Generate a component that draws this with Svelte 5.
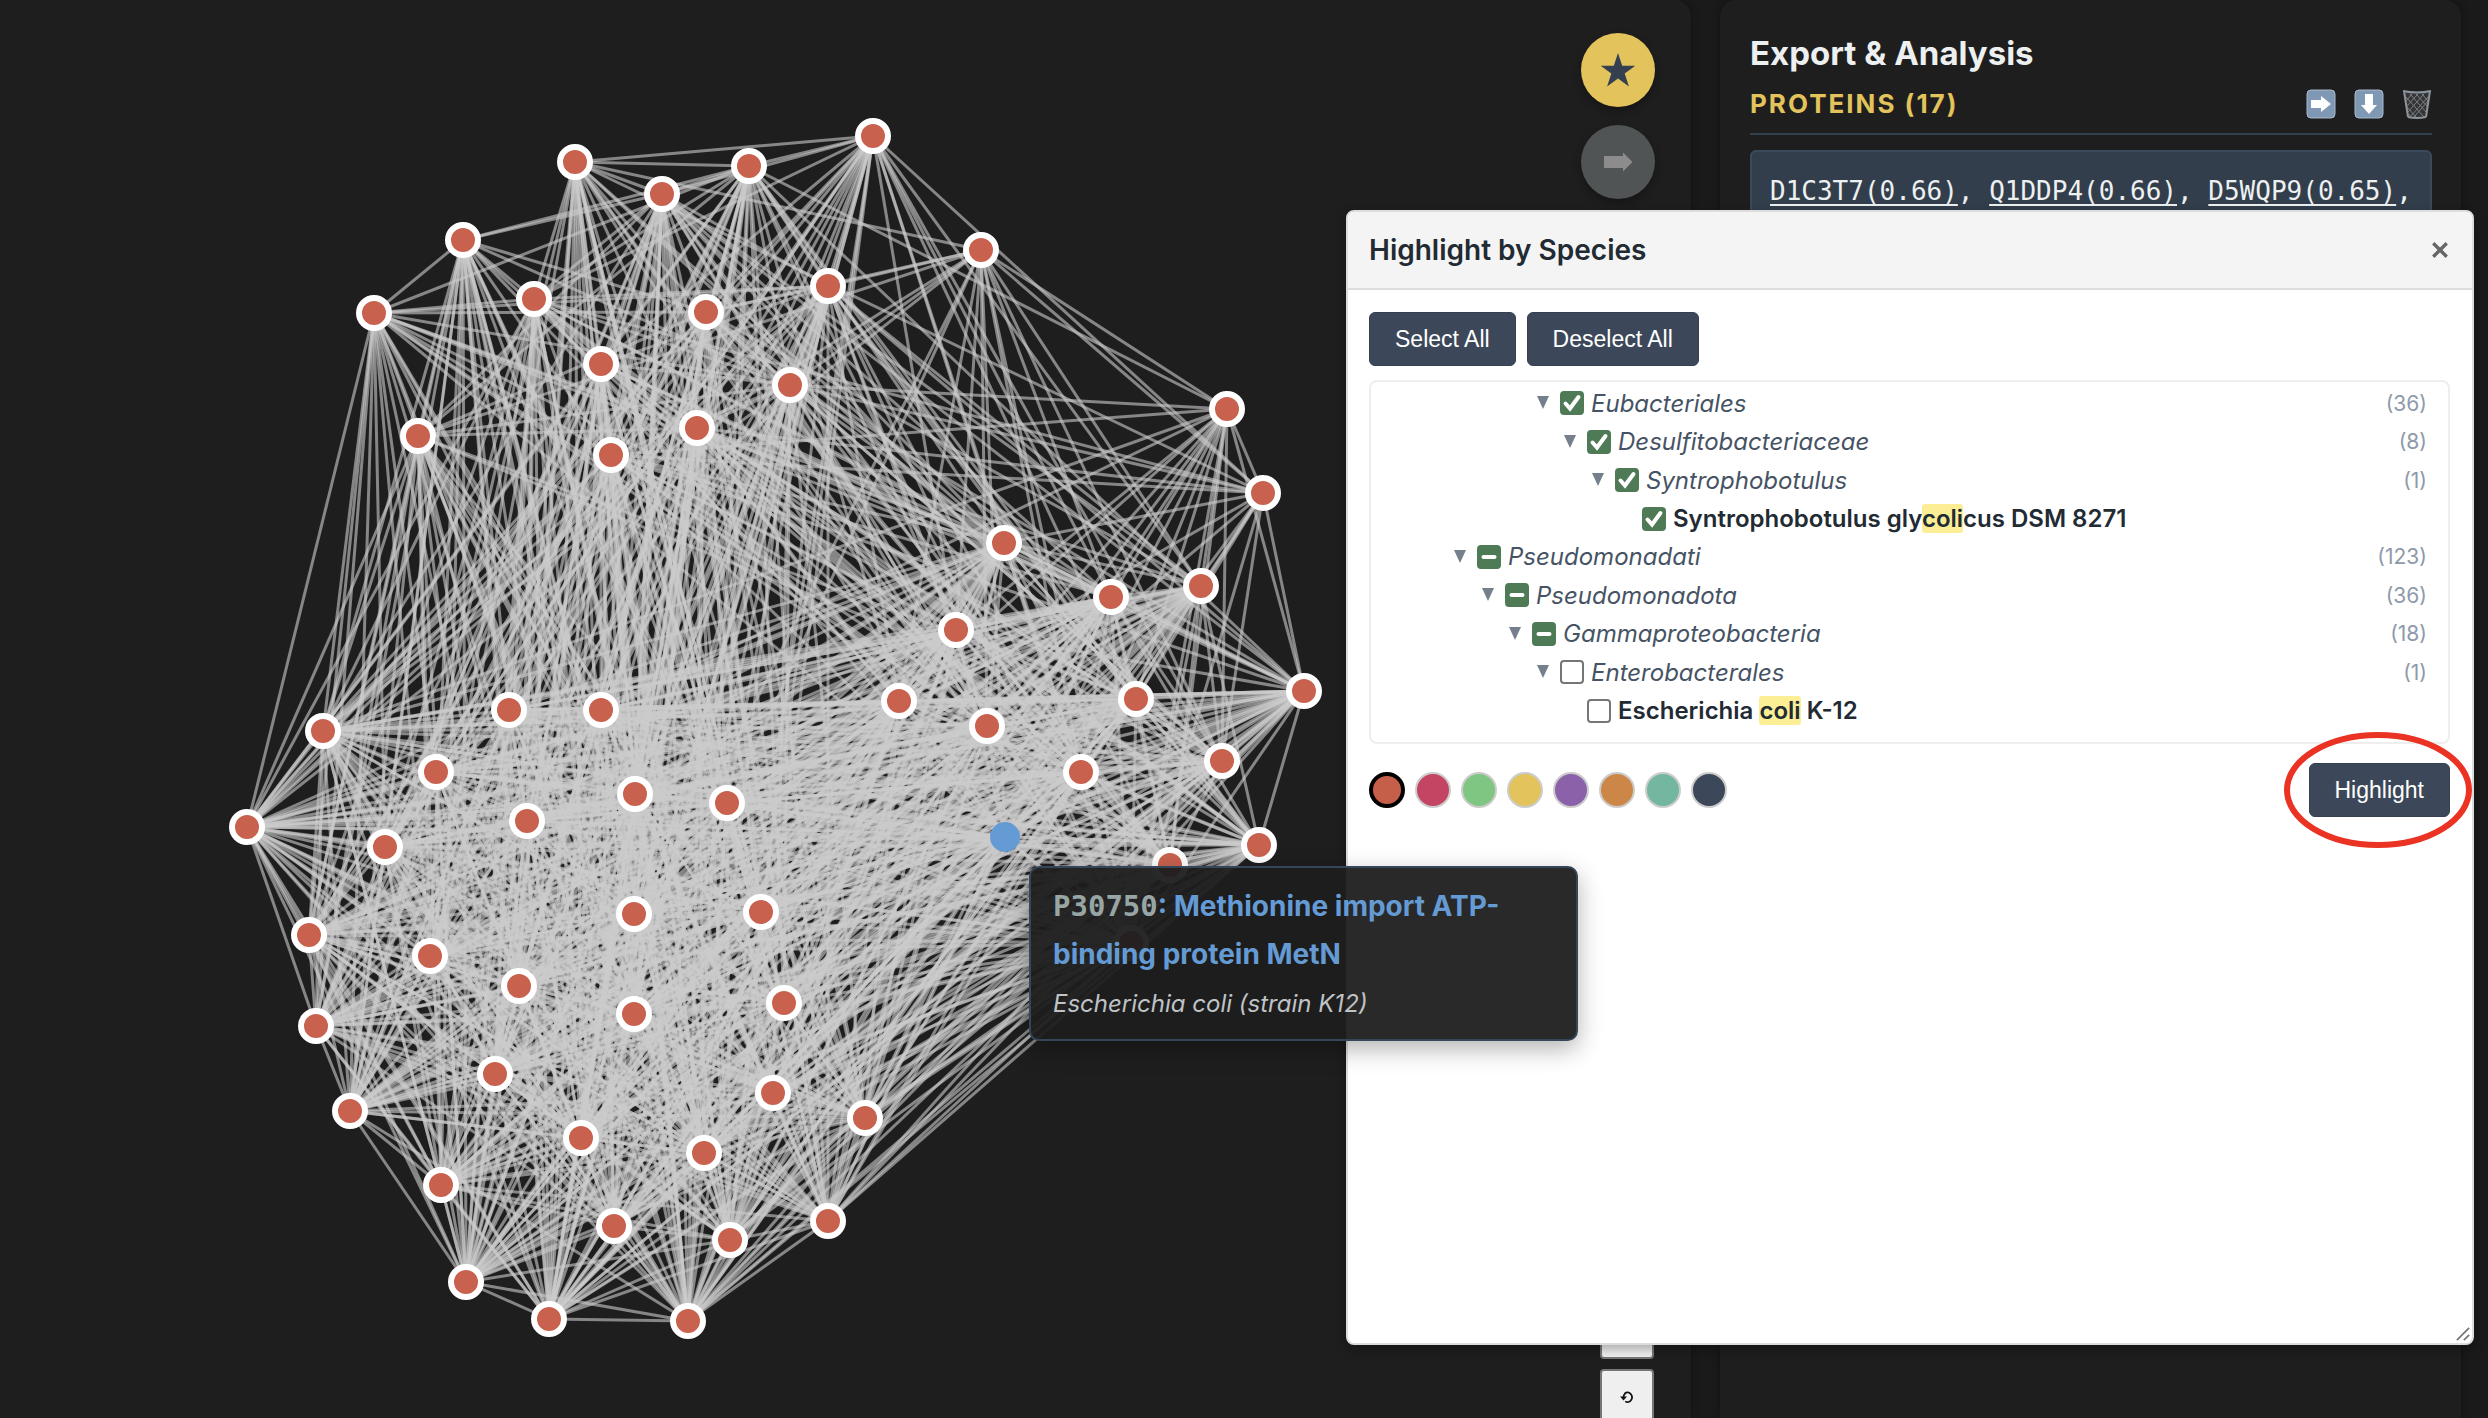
<script>
  // Protein nodes, grouped by the part of the layout they settle in.
  const top = [
    [575, 162], [749, 166], [873, 136], [662, 194], [463, 240], [374, 313], [534, 299], [828, 286],
    [706, 312], [601, 364], [790, 385], [697, 428], [611, 455], [418, 436]
  ];
  const bridge = [[981, 250], [1227, 409], [1263, 493]];
  const right = [
    [1004, 543], [1111, 597], [1201, 586], [956, 630], [899, 701], [987, 726], [1136, 699], [1304, 691],
    [1222, 761], [1081, 772], [1005, 837], [1259, 845], [1170, 865], [1131, 943]
  ];
  const bottom = [
    [247, 827], [323, 731], [436, 772], [509, 710], [601, 710], [385, 847], [527, 821], [635, 794],
    [727, 803], [309, 935], [430, 956], [519, 986], [634, 914], [761, 912], [316, 1026], [634, 1014],
    [784, 1003], [495, 1074], [773, 1093], [350, 1111], [581, 1138], [704, 1153], [441, 1185],
    [614, 1226], [730, 1240], [466, 1282], [549, 1319], [688, 1321], [828, 1221], [865, 1118]
  ];
  const nodes = [
    ...top.map(([x, y]) => ({ x, y, g: 't' })),
    ...bridge.map(([x, y]) => ({ x, y, g: 'u' })),
    ...right.map(([x, y]) => ({ x, y, g: 'r', active: x === 1005 })),
    ...bottom.map(([x, y]) => ({ x, y, g: 'b' }))
  ];
  const density = {
    tt: 0.62, tu: 0.36, tr: 0.42, tb: 0.58, uu: 1, ur: 0.7, ub: 0.14, rr: 0.8, rb: 0.9, bb: 0.84
  };
  let seed = 7;
  const rand = () => {
    seed = (seed * 1103515245 + 12345) % 2147483648;
    return seed / 2147483648;
  };
  const edges = [];
  nodes.forEach((a, i) => {
    nodes.slice(i + 1).forEach((b) => {
      const flank = a.g === 't' && a.x < 420 && b.x < 330;
      if (rand() < density[a.g + b.g] || flank) edges.push({ a, b });
    });
  });

  const rows = [
    { level: 4, state: 'on', name: ['Eubacteriales'], count: 36 },
    { level: 5, state: 'on', name: ['Desulfitobacteriaceae'], count: 8 },
    { level: 6, state: 'on', name: ['Syntrophobotulus'], count: 1 },
    { level: 7, state: 'on', name: ['Syntrophobotulus gly', 'coli', 'cus DSM 8271'], leaf: true },
    { level: 1, state: 'mixed', name: ['Pseudomonadati'], count: 123 },
    { level: 2, state: 'mixed', name: ['Pseudomonadota'], count: 36 },
    { level: 3, state: 'mixed', name: ['Gammaproteobacteria'], count: 18 },
    { level: 4, state: 'off', name: ['Enterobacterales'], count: 1 },
    { level: 5, state: 'off', name: ['Escherichia ', 'coli', ' K-12'], leaf: true }
  ];
  const colours = [
    ['Red', '#c65f4a'], ['Pink', '#c44464'], ['Green', '#7fc682'], ['Yellow', '#e3c35b'],
    ['Purple', '#8b62a9'], ['Orange', '#cb8648'], ['Teal', '#73b7a0'], ['Navy', '#3c4859']
  ];
  const proteins = ['D1C3T7(0.66)', 'Q1DDP4(0.66)', 'D5WQP9(0.65)'];
</script>

<div class="app">
  <main class="panel network">
    <svg class="graph" viewBox="0 0 1691 1418" preserveAspectRatio="xMinYMin meet" role="img" aria-label="Protein network">
      <g class="edges">
        {#each edges as { a, b }}
          <line x1={a.x} y1={a.y} x2={b.x} y2={b.y} />
        {/each}
      </g>
      {#each nodes as n}
        <circle class="node" class:active={n.active} cx={n.x} cy={n.y} r="15" />
      {/each}
    </svg>
    <div class="tools">
      <button class="round star" aria-label="Favourite">
        <svg viewBox="0 0 36 36"><path d="M18 1l4.200 12.800h13.100l-10.600 7.700 4.200 13L18 26.500 7.100 34.500l4.200-13L.7 13.800h13.100z" /></svg>
      </button>
      <button class="round" aria-label="Export selection" disabled>
        <svg viewBox="0 0 36 36"><path d="M4 12h19V8.500l9.500 9.500-9.500 9.500V24H4z" /></svg>
      </button>
    </div>
    <div class="zoomers">
      <button aria-label="Zoom out"></button>
      <button aria-label="Reset view">
        <svg viewBox="0 0 16 16"><path d="M5.500 4A5 5.500 0 1 1 6 13" /><path class="tip" d="M0 7.500h8L4 12z" /><path d="M4 8.500Q4 5.500 6 3.800" /></svg>
      </button>
    </div>
  </main>

  <aside class="panel export">
    <h1>Export &amp; Analysis</h1>
    <div class="section">
      <h2>PROTEINS (17)</h2>
      <div class="actions">
        <button aria-label="Send proteins">
          <svg viewBox="0 0 30 30"><rect class="tile" x="1" y="1" width="28" height="28" rx="4" /><path class="arrow" d="M5 11h10V7l10 8-10 8v-4H5z" /></svg>
        </button>
        <button aria-label="Download proteins">
          <svg viewBox="0 0 30 30"><rect class="tile" x="1" y="1" width="28" height="28" rx="4" /><path class="arrow" d="M11 5h8v11h4l-8 9-8-9h4z" /></svg>
        </button>
        <button aria-label="Clear proteins">
          <svg viewBox="0 0 30 30">
            <path class="bin" d="M2 2h26l-4 26q-9 2-18 0z" />
            <path class="mesh" d="M4 8l18 20M8 5l16 18M14 5l11 12M20 5l6 7M26 8L8 28M22 5L6 23M16 5L5 17M10 5l-6 7M12 28L26 12M4 17l11 12M5 23l4 5" />
            <path class="rim" d="M1 2q14 3 28 0M2 2l4 26M28 2l-4 26" />
            <path class="rim" d="M6 28q9 2 18 0" />
          </svg>
        </button>
      </div>
    </div>
    <p class="list">{#each proteins as p}<a href="#{p}">{p}</a>{', '}{/each}</p>
  </aside>

  <div class="dialog" role="dialog" aria-labelledby="dialog-title">
    <header>
      <h2 id="dialog-title">Highlight by Species</h2>
      <button class="close" aria-label="Close">
        <svg viewBox="0 0 16 16"><path d="M2 2l12 12M14 2L2 14" /></svg>
      </button>
    </header>
    <div class="body">
      <div class="bulk">
        <button class="btn">Select All</button>
        <button class="btn">Deselect All</button>
      </div>
      <div class="tree">
        {#each rows as r}
          <div class="row l{r.level}">
            {#if !r.leaf}
              <button class="twist" aria-label="Collapse {r.name[0]}">
                <svg viewBox="0 0 12 14"><path d="M0 0h12L6 13z" /></svg>
              </button>
            {/if}
            <label class:leaf={r.leaf}>
              <span class="box">
                <input type="checkbox" checked={r.state === 'on'} indeterminate={r.state === 'mixed'} />
                {#if r.state === 'on'}
                  <svg viewBox="0 0 24 24"><path d="M5.500 12.500l4.500 5L18.500 6" /></svg>
                {:else if r.state === 'mixed'}
                  <svg viewBox="0 0 24 24"><path d="M6.500 12h11" /></svg>
                {/if}
              </span>
              <span class="name">{r.name[0]}{#if r.leaf}<mark>{r.name[1]}</mark>{r.name[2]}{/if}</span>
            </label>
            {#if !r.leaf}<span class="count">({r.count})</span>{/if}
          </div>
        {/each}
      </div>
      <div class="foot">
        <div class="swatches">
          {#each colours as [name, value], i}
            <button class="swatch" class:picked={i === 0} aria-label={name} style="background: {value}"></button>
          {/each}
        </div>
        <div class="confirm">
          <button class="btn">Highlight</button>
          <svg class="ring" viewBox="0 0 188 116"><ellipse cx="94" cy="58" rx="91" ry="55" /></svg>
        </div>
      </div>
    </div>
    <svg class="grip" viewBox="0 0 16 16"><path d="M1 15L15 1M9 15l6-6" /></svg>
  </div>

  <div class="tooltip" role="tooltip">
    <strong><code>P30750</code>: Methionine import ATP-<br />binding protein MetN</strong>
    <em>Escherichia coli (strain K12)</em>
  </div>
</div>

<style>
  :global(body) {
    background: #1a1a1a;
    overflow: hidden;
  }
  .app {
    --slate: #3c4859;
    --gold: #e3c35b;
    --mono: 'DejaVu Sans Mono', 'Liberation Mono', monospace;
    position: relative;
    box-sizing: border-box;
    display: grid;
    grid-template-columns: minmax(0, 1fr) 741px;
    gap: 29px;
    height: 100vh;
    padding-right: 27px;
    font-family: Inter, 'Liberation Sans', sans-serif;
    overflow: hidden;
  }
  h1, h2, p {
    margin: 0;
  }
  button {
    padding: 0;
    border: 0;
    background: none;
    font: inherit;
    color: inherit;
    cursor: pointer;
  }
  svg {
    display: block;
  }
  .panel {
    background: #1e1e1e;
    border-radius: 16px 16px 0 0;
    box-shadow: 0 0 8px rgba(0, 0, 0, 0.35);
  }
  .network {
    position: relative;
    border-top-left-radius: 0;
  }
  .graph {
    width: 100%;
  }
  .edges {
    stroke: #ccc;
    stroke-width: 3;
    stroke-opacity: 0.6;
  }
  .node {
    fill: #c8624e;
    stroke: #fff;
    stroke-width: 6;
  }
  .node.active {
    fill: #659bd4;
    stroke: none;
  }
  .tools {
    position: absolute;
    top: 33px;
    right: 36px;
    display: grid;
    gap: 18px;
  }
  .round {
    display: grid;
    place-items: center;
    width: 74px;
    height: 74px;
    border-radius: 50%;
    background: #505455;
    box-shadow: 0 4px 8px rgba(0, 0, 0, 0.3);
  }
  .round svg {
    width: 36px;
    fill: #8c8c8c;
  }
  .round.star {
    background: var(--gold);
  }
  .round.star svg {
    fill: #34404f;
  }
  .zoomers {
    position: absolute;
    top: 1304px;
    right: 37px;
    display: grid;
    gap: 10px;
  }
  .zoomers button {
    display: grid;
    place-items: center;
    box-sizing: border-box;
    width: 54px;
    height: 55px;
    border: 2px solid #767676;
    border-radius: 4px;
    background: #efefef;
  }
  .zoomers svg {
    width: 14px;
    fill: none;
    stroke: #111;
    stroke-width: 2;
  }
  .zoomers .tip {
    fill: #111;
    stroke: none;
  }
  .export {
    padding: 32px 29px 0 30px;
    color: #edf0f1;
  }
  h1 {
    font-size: 33px;
    line-height: 43px;
    font-weight: 700;
  }
  .section {
    display: flex;
    justify-content: space-between;
    align-items: center;
    height: 58px;
    border-bottom: 2px solid #33414f;
  }
  .section h2 {
    color: var(--gold);
    font-size: 26px;
    line-height: 32px;
    font-weight: 700;
    letter-spacing: 2px;
  }
  .actions {
    display: flex;
    gap: 18px;
  }
  .actions svg {
    width: 30px;
  }
  .tile {
    fill: #7f99b5;
    stroke: #a7b9ca;
  }
  .arrow {
    fill: #fff;
  }
  .bin {
    fill: #333537;
  }
  .mesh {
    fill: none;
    stroke: #7d7f82;
  }
  .rim {
    fill: none;
    stroke: #8b939b;
    stroke-width: 2;
  }
  .list {
    box-sizing: border-box;
    height: 200px;
    margin-top: 15px;
    padding: 18px 8px 18px 18px;
    border: 2px solid #3a4a5c;
    border-radius: 6px;
    background: #323e4c;
    font-family: var(--mono);
    font-size: 26px;
    line-height: 42px;
    overflow: hidden;
  }
  .list a {
    color: inherit;
    text-underline-offset: 4px;
  }
  .dialog {
    position: absolute;
    top: 210px;
    right: 14px;
    box-sizing: border-box;
    width: 1128px;
    height: 1135px;
    border: 2px solid #ddd;
    border-radius: 8px;
    background: #fff;
    box-shadow: 0 4px 12px rgba(0, 0, 0, 0.3);
    overflow: hidden;
  }
  header {
    display: flex;
    align-items: center;
    justify-content: space-between;
    height: 76px;
    padding: 0 23px 0 21px;
    border-bottom: 2px solid #ddd;
    background: #f4f4f4;
  }
  header h2 {
    color: #222a33;
    font-size: 28px;
    font-weight: 600;
  }
  .close svg {
    width: 18px;
    fill: none;
    stroke: #666;
    stroke-width: 3;
  }
  .body {
    padding: 22px 22px 22px 21px;
  }
  .bulk {
    display: flex;
    gap: 11px;
  }
  .btn {
    height: 54px;
    padding: 0 25px;
    border: 1px solid #34404f;
    border-radius: 6px;
    background: var(--slate);
    color: #fff;
    font-family: 'Liberation Sans', sans-serif;
    font-size: 23px;
  }
  .tree {
    box-sizing: border-box;
    display: grid;
    grid-auto-rows: 1fr;
    height: 364px;
    margin-top: 14px;
    padding: 2px 21px 12px 0;
    border: 2px solid #eee;
    border-radius: 8px;
  }
  .row {
    display: flex;
    align-items: center;
    gap: 11px;
    color: #465364;
    font-size: 24px;
  }
  .l1 { padding-left: 83px; }
  .l2 { padding-left: 111px; }
  .l3 { padding-left: 138px; }
  .l4 { padding-left: 166px; }
  .l5 { padding-left: 193px; }
  .l6 { padding-left: 221px; }
  .l7 { padding-left: 248px; }
  .twist svg {
    width: 12px;
    fill: #75808c;
  }
  label {
    display: flex;
    align-items: center;
    gap: 7px;
    font-style: italic;
  }
  label.leaf {
    padding-left: 23px;
    color: #222a33;
    font-style: normal;
    font-weight: 600;
  }
  .name {
    white-space: pre;
  }
  mark {
    border-radius: 3px;
    background: #fbee95;
    color: inherit;
  }
  .box {
    display: grid;
  }
  .box > * {
    grid-area: 1 / 1;
    width: 24px;
    height: 24px;
  }
  input {
    appearance: none;
    box-sizing: border-box;
    margin: 0;
    border: 2px solid #767676;
    border-radius: 4px;
    background: #fff;
  }
  input:checked, input:indeterminate {
    border-color: #4f7a56;
    background: #4f7a56;
  }
  .box svg {
    fill: none;
    stroke: #fff;
    stroke-width: 4;
    stroke-linecap: round;
    pointer-events: none;
  }
  .count {
    margin-left: auto;
    color: #8e9aaa;
    font-size: 21px;
  }
  .foot {
    display: flex;
    align-items: center;
    justify-content: space-between;
    margin-top: 19px;
  }
  .swatches {
    display: flex;
    gap: 10px;
  }
  .swatch {
    box-sizing: border-box;
    width: 36px;
    height: 36px;
    border: 2px solid #ccc;
    border-radius: 50%;
  }
  .swatch.picked {
    border: 4px solid #000;
  }
  .confirm {
    position: relative;
  }
  .ring {
    position: absolute;
    top: -31px;
    right: -22px;
    width: 188px;
    fill: none;
    stroke: #ea3323;
    stroke-width: 6;
    pointer-events: none;
  }
  .grip {
    position: absolute;
    right: 2px;
    bottom: 2px;
    width: 14px;
    stroke: #777;
    stroke-width: 2;
  }
  .tooltip {
    position: absolute;
    top: 866px;
    left: 1029px;
    box-sizing: border-box;
    width: 549px;
    padding: 14px 22px 15px;
    border: 2px solid #35465a;
    border-radius: 10px;
    background: rgba(30, 30, 30, 0.95);
    box-shadow: 0 8px 24px rgba(0, 0, 0, 0.3);
  }
  .tooltip strong {
    display: block;
    color: #659bd4;
    font-size: 28px;
    line-height: 48px;
    font-weight: 700;
  }
  .tooltip code {
    color: #98a5a5;
    font-family: var(--mono);
    font-size: 29px;
    line-height: 40px;
  }
  .tooltip em {
    display: block;
    margin-top: 6px;
    color: #bfc3c6;
    font-size: 24px;
    line-height: 40px;
  }
</style>
